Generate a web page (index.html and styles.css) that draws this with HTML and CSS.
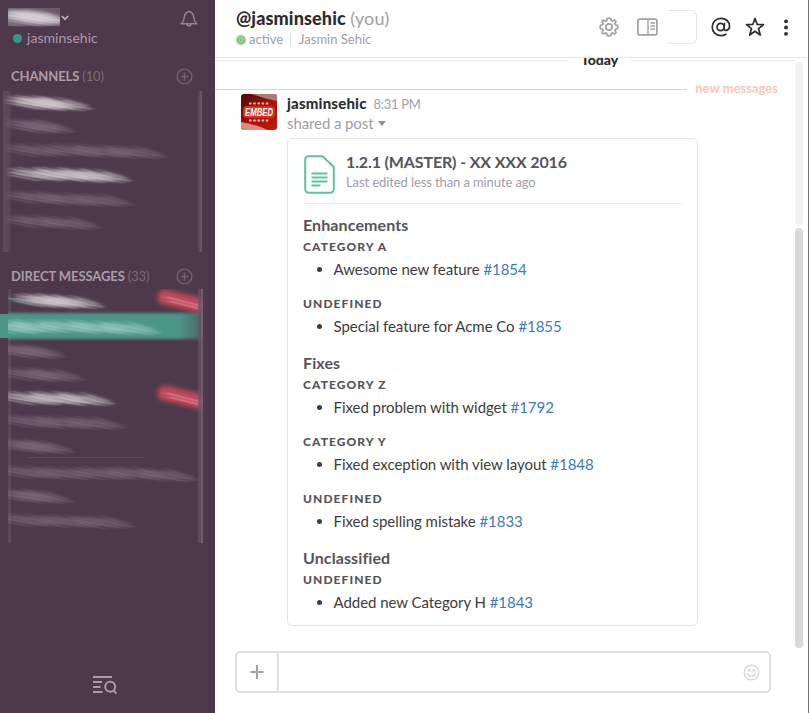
FILE: index.html
```html
<!DOCTYPE html>
<html lang="en">
<head>
<meta charset="utf-8">
<title>jasminsehic</title>
<link rel="stylesheet" href="styles.css">
</head>
<body>
<svg class="defs" width="0" height="0" aria-hidden="true">
  <defs>
    <filter id="soft" filterUnits="userSpaceOnUse" x="-12" y="-14" width="84" height="30"><feGaussianBlur stdDeviation="4 2"/></filter>
    <filter id="fine" filterUnits="userSpaceOnUse" x="-12" y="-16" width="84" height="40"><feGaussianBlur stdDeviation="2.6 0.7"/></filter>
    <filter id="glow" filterUnits="userSpaceOnUse" x="-14" y="-16" width="84" height="44"><feGaussianBlur stdDeviation="2.4"/></filter>
    <filter id="edge" x="-10%" y="-20%" width="120%" height="140%"><feGaussianBlur stdDeviation="1.4"/></filter>
    <linearGradient id="fade"><stop offset=".85" stop-color="#4c9689"/><stop offset="1" stop-color="#4c9689" stop-opacity=".3"/></linearGradient>
    <g id="smear">
      <path d="M2-5 34-4 50 1 54 5 38 5 18 4 0 0Z" fill="currentColor" opacity=".4" filter="url(#soft)"/>
      <g stroke="currentColor" fill="none" filter="url(#fine)">
        <path d="M0-6 26 0M8-7 40 1M24-7 54 2" opacity=".35"/>
        <path d="M0-2 32 4M12-4 48 4M30-4 58 5" opacity=".6"/>
        <path d="M0 1 30 7M16-1 50 7M4-4 40 4" opacity=".4"/>
        <path d="M8 0 42 6M24-3 56 6" opacity=".45"/>
      </g>
    </g>
    <g id="alert">
      <path d="M8 1 50 11" stroke="#c14a58" stroke-width="15" stroke-linecap="round" filter="url(#glow)"/>
      <path d="M9 1 44 10M12 5 44 13" fill="none" stroke="#e8a0aa" stroke-width="1.300" opacity=".6" filter="url(#fine)"/>
    </g>
  </defs>
</svg>

<aside class="sidebar">
  <div class="team">
    <div class="team-row">
      <svg class="team-name" width="52" height="20" viewBox="0 0 52 20" color="#ddd6dc">
        <path d="M0 0H52V18H0Z" fill="#6b5969"/>
        <path d="M0 3 20 2 52 13V17L30 16 0 9Z" fill="#a99da8" opacity=".8" filter="url(#edge)"/>
        <use href="#smear" x="-5" y="8"/><use href="#smear" x="5" y="9"/><use href="#smear" x="-14" y="12" opacity=".5"/>
      </svg>
      <svg width="8" height="6" viewBox="0 0 8 6" fill="none" stroke="#b9afb8" stroke-width="1.700"><path d="M.8 1 4 4.200 7.200 1"/></svg>
      <svg class="bell" width="18" height="18" viewBox="0 0 18 18" fill="none" stroke="#93848f" stroke-width="1.500" stroke-linejoin="round"><path d="M9 1.200C6 2.200 4.500 4.500 4.300 7.200 4.100 10.200 3.600 11.700 1.200 13.800H16.800C14.400 11.700 13.900 10.200 13.700 7.200 13.500 4.500 12 2.200 9 1.200ZM7 14C7.200 16.600 10.800 16.600 11 14"/></svg>
    </div>
    <div class="self"><span class="presence"></span>jasminsehic</div>
  </div>

  <div class="section-head channels-head">
    <h2>CHANNELS <span>(10)</span></h2>
    <svg width="17" height="17" viewBox="0 0 17 17" fill="none" stroke="#746174" stroke-width="1.400"><circle cx="8.500" cy="8.500" r="7.400"/><path d="M8.500 4.500V12.500M4.500 8.500H12.500"/></svg>
  </div>
  <svg class="list" width="215" height="162" viewBox="0 90 215 162">
    <path d="M3 91H11V252H3Z" fill="#5b485b"/><path d="M9 91H11V252H9Z" fill="#4d394b" opacity=".5"/>
    <path d="M198 91H202V252H198Z" fill="#5b485b"/><path d="M200 91H202V252H200Z" fill="#675567"/>
    <g color="#d4ccd0"><use href="#smear" x="8" y="102"/><use href="#smear" x="34" y="104"/><use href="#smear" x="16" y="103"/>
      <use href="#smear" x="10" y="174"/><use href="#smear" x="34" y="174"/><use href="#smear" x="55" y="175"/><use href="#smear" x="73" y="176"/></g>
    <g color="#846e84" opacity=".9"><use href="#smear" x="6" y="125"/><use href="#smear" x="17" y="127"/>
      <use href="#smear" x="8" y="150"/><use href="#smear" x="45" y="150"/><use href="#smear" x="75" y="151"/><use href="#smear" x="108" y="152"/>
      <use href="#smear" x="8" y="197"/><use href="#smear" x="40" y="199"/><use href="#smear" x="75" y="200"/>
      <use href="#smear" x="8" y="221"/><use href="#smear" x="43" y="223"/></g>
  </svg>

  <div class="section-head dm-head">
    <h2>DIRECT MESSAGES <span>(33)</span></h2>
    <svg width="17" height="17" viewBox="0 0 17 17" fill="none" stroke="#746174" stroke-width="1.400"><circle cx="8.500" cy="8.500" r="7.400"/><path d="M8.500 4.500V12.500M4.500 8.500H12.500"/></svg>
  </div>
  <svg class="list" width="215" height="258" viewBox="0 287 215 258">
    <defs><clipPath id="dm"><path d="M8 289H203V543H8Z"/></clipPath></defs>
    <path d="M0 314H8V338H0Z" fill="#4c9689"/>
    <g clip-path="url(#dm)">
      <path d="M8 289H11V543H8Z" fill="#67566a" opacity=".5"/>
      <use href="#alert" x="157" y="296"/><use href="#alert" x="157" y="392"/>
      <path d="M0 313H210V339H0Z" fill="url(#fade)" filter="url(#edge)"/>
      <g color="#d4ccd0"><use href="#smear" x="14" y="300"/><use href="#smear" x="28" y="301"/><use href="#smear" x="46" y="302"/>
        <use href="#smear" x="4" y="398"/><use href="#smear" x="30" y="398"/><use href="#smear" x="56" y="399"/></g>
      <path d="M8 298 30 304" stroke="#5e9aa0" stroke-width="2" opacity=".6"/>
      <g color="#b4d9d2" opacity=".8"><use href="#smear" x="-14" y="327"/><use href="#smear" x="6" y="326"/><use href="#smear" x="40" y="326"/><use href="#smear" x="70" y="327"/><use href="#smear" x="102" y="328"/></g>
      <g color="#846e84" opacity=".9"><use href="#smear" x="-5" y="350"/><use href="#smear" x="8" y="352"/>
        <use href="#smear" x="3" y="374"/><use href="#smear" x="27" y="375"/>
        <use href="#smear" x="3" y="421"/><use href="#smear" x="35" y="422"/><use href="#smear" x="68" y="423"/>
        <use href="#smear" x="-2" y="445"/><use href="#smear" x="16" y="447"/>
        <use href="#smear" x="3" y="472"/><use href="#smear" x="38" y="473"/><use href="#smear" x="75" y="473"/><use href="#smear" x="108" y="473"/><use href="#smear" x="140" y="475"/>
        <use href="#smear" x="-2" y="495"/><use href="#smear" x="15" y="497"/>
        <use href="#smear" x="3" y="520"/><use href="#smear" x="40" y="521"/><use href="#smear" x="76" y="522"/></g>
      <path d="M28 457.500H145" stroke="#6b596b" opacity=".5"/>
      <path d="M198 289H203V543H198Z" fill="#655466" opacity=".7"/><path d="M201 289H203V543H201Z" fill="#7b6a7b" opacity=".5"/>
    </g>
  </svg>

  <svg class="switcher" width="26" height="20" viewBox="0 0 26 20" fill="none" stroke="#a99ba8" stroke-width="2"><path d="M1 2H20M1 7H10M1 12H8.500M1 17H10.500"/><circle cx="18.200" cy="11.800" r="5"/><path d="M21.500 15.500 24.500 18.500"/></svg>
</aside>

<main class="main">
  <header class="header">
    <div class="who">
      <h1>@jasminsehic <span>(you)</span></h1>
      <div class="status"><span class="dot"></span>active<i></i>Jasmin Sehic</div>
    </div>
    <div class="tools">
      <svg class="gear" width="20" height="20" viewBox="0 0 20 20" fill="none" stroke="#a0a0a5" stroke-width="1.700" stroke-linejoin="round"><circle cx="10" cy="10" r="3.200"/><path d="M8.300 1.500Q10 .8 11.700 1.500L12.400 3.700 13.400 4.100 15.500 3.100Q16.600 3.500 17 4.600L15.900 6.700 16.300 7.700 18.500 8.400Q19.200 10 18.500 11.600L16.300 12.300 15.900 13.300 17 15.400Q16.600 16.500 15.500 16.900L13.400 15.900 12.400 16.300 11.700 18.500Q10 19.200 8.300 18.500L7.600 16.300 6.600 15.900 4.500 16.900Q3.400 16.500 3 15.400L4.100 13.300 3.700 12.300 1.500 11.600Q.8 10 1.500 8.400L3.700 7.700 4.100 6.700 3 4.600Q3.400 3.500 4.500 3.100L6.600 4.100 7.600 3.700Z"/></svg>
      <svg class="panel" width="21" height="18" viewBox="0 0 21 18" fill="none" stroke="#a0a0a5" stroke-width="1.700"><rect x=".9" y="1.200" width="19" height="15.600" rx="1.800"/><path d="M11 1V17M13.500 5H18M13.500 8H18M13.500 11H18" stroke-width="1.400"/></svg>
      <span class="search"></span>
      <svg class="at" width="20" height="20" viewBox="0 0 20 20" fill="none" stroke="#2c2d30" stroke-width="1.700" stroke-linecap="round"><circle cx="9.600" cy="10" r="3.600"/><path d="M13.500 6.500 13 11.200C12.900 14.500 18.500 14.300 18.500 9.300 18.500 4.500 14.800 1.300 10 1.300 5 1.300 1.200 5.200 1.200 10 1.200 15 5 18.700 10 18.700 12 18.700 13.500 18.200 15 17.300"/></svg>
      <svg class="star" width="20" height="20" viewBox="0 0 20 20" fill="none" stroke="#2c2d30" stroke-width="1.700" stroke-linejoin="round"><path d="M10 1.500 12.200 7.500 18.500 7.700 13.500 11.600 15.300 18 10 14.300 4.700 18 6.500 11.600 1.500 7.700 7.800 7.500Z"/></svg>
      <svg class="more" width="4" height="17" viewBox="0 0 4 17" fill="#2c2d30"><circle cx="2" cy="2.300" r="1.900"/><circle cx="2" cy="8.500" r="1.900"/><circle cx="2" cy="14.800" r="1.900"/></svg>
    </div>
  </header>

  <div class="body">
    <div class="messages">
      <div class="day"><span>Today</span></div>
      <div class="unread"><span>new messages</span></div>
      <article class="message">
        <svg class="avatar" width="36" height="36" viewBox="0 0 36 36">
          <defs><linearGradient id="red" x1="0" y1="0" x2="1" y2="1"><stop stop-color="#4e0903"/><stop offset=".5" stop-color="#a11109"/><stop offset="1" stop-color="#c41b0a"/></linearGradient></defs>
          <path d="M0 0H36V36H0Z" fill="url(#red)"/>
          <path d="M11 0H36V7Q24 5 11 0Z" fill="#a67e79"/><path d="M0 28Q14 30 27 36H0Z" fill="#e08a80"/>
          <path d="M8 9.500H28M8 26.500H28" stroke="#f5c2b8" stroke-width="2.200" stroke-dasharray="2.500 1.700"/>
          <rect x="2" y="12" width="32" height="12" rx="4" fill="#df2b20"/>
          <text x="18" y="21.500" text-anchor="middle" textLength="28" lengthAdjust="spacingAndGlyphs" class="embed">EMBED</text>
        </svg>
        <div class="content">
          <div class="byline"><b>jasminsehic</b><time>8:31 PM</time></div>
          <div class="shared">shared a post<i></i></div>
          <section class="post">
            <div class="post-head">
              <svg width="32" height="39" viewBox="0 0 32 39" fill="none" stroke="#5fc39a" stroke-width="2" stroke-linejoin="round"><path d="M5 1.200H18.500L29.800 12V34Q29.800 37.800 26 37.800H5Q1.200 37.800 1.200 34V5Q1.200 1.200 5 1.200Z"/><path d="M7.500 18.500H23.500M7.500 22.500H23.500M7.500 26.500H23.500M7.500 30.500H16.500" stroke-width="1.800"/></svg>
              <div><h2>1.2.1 (MASTER) - XX XXX 2016</h2><p>Last edited less than a minute ago</p></div>
            </div>
            <h3>Enhancements</h3>
            <h4>CATEGORY A</h4>
            <ul><li>Awesome new feature <a>#1854</a></li></ul>
            <h4>UNDEFINED</h4>
            <ul><li>Special feature for Acme Co <a>#1855</a></li></ul>
            <h3>Fixes</h3>
            <h4>CATEGORY Z</h4>
            <ul><li>Fixed problem with widget <a>#1792</a></li></ul>
            <h4>CATEGORY Y</h4>
            <ul><li>Fixed exception with view layout <a>#1848</a></li></ul>
            <h4>UNDEFINED</h4>
            <ul><li>Fixed spelling mistake <a>#1833</a></li></ul>
            <h3>Unclassified</h3>
            <h4>UNDEFINED</h4>
            <ul><li>Added new Category H <a>#1843</a></li></ul>
          </section>
        </div>
      </article>
    </div>
    <div class="scrollbar"><div class="track"></div><div class="thumb"></div></div>
  </div>

  <footer class="composer">
    <div class="plus"><svg width="14" height="14" viewBox="0 0 14 14" stroke="#a0a0a2" stroke-width="2"><path d="M7 0V14M.5 7H13.500"/></svg></div>
    <div class="input"><svg width="17" height="17" viewBox="0 0 17 17" fill="none" stroke="#d8d8da" stroke-width="1.400"><circle cx="8.500" cy="8.500" r="7.300"/><path d="M4.800 9.500C5.500 13 11.500 13 12.200 9.500"/><circle cx="6.200" cy="6.200" r=".8" fill="#d8d8da"/><circle cx="10.800" cy="6.200" r=".8" fill="#d8d8da"/></svg></div>
  </footer>
</main>
</body>
</html>
```
FILE: styles.css
```css
* { box-sizing: border-box; }
body { margin: 0; width: 809px; height: 713px; display: flex; overflow: hidden; font-family: Lato, sans-serif; font-size: 15px; color: #2c2d30; background: #fff; }
h1, h2, h3, h4, p, ul { margin: 0; padding: 0; }
svg { display: block; flex: none; }
.defs { position: absolute; }

.sidebar { width: 215px; height: 713px; flex: none; background: #4d394b; display: flex; flex-direction: column; }
.team { height: 66px; padding: 8px 17px 0 8px; }
.team-row { display: flex; height: 20px; }
.team-row svg:nth-child(2) { margin: 7px 0 0 1px; }
.team-name { overflow: hidden; }
.bell { margin: 2px 0 0 auto; }
.self { display: flex; align-items: center; height: 20px; line-height: 18px; padding-bottom: 1px; color: #ab9ba9; font-size: 14px; letter-spacing: .04px; }
.presence { width: 9px; height: 9px; border-radius: 50%; background: #38978d; margin: 1px 5px 0; }
.section-head { display: flex; align-items: center; justify-content: space-between; padding: 0 22px 0 11px; height: 20px; }
.section-head h2 { font-size: 13px; line-height: 20px; font-weight: 700; color: #ab9ba9; letter-spacing: -.1px; }
.section-head span { font-weight: 400; color: #7d6a7c; }
.channels-head { margin-bottom: 4px; }
.dm-head { margin-top: 14px; margin-bottom: 1px; }
.switcher { margin: auto 0 18px 92px; }

.main { flex: 1; display: flex; flex-direction: column; min-width: 0; border-right: 1px solid #6f6f71; }
.header { height: 58px; flex: none; display: flex; justify-content: space-between; border-bottom: 1px solid #e5e5e5; }
.who { padding: 7px 0 0 21px; }
.who h1 { font-size: 18px; line-height: 22px; font-weight: 900; white-space: nowrap; letter-spacing: .12px; }
.who h1 span { font-weight: 400; color: #9e9ea6; }
.status { display: flex; align-items: center; font-size: 13px; line-height: 20px; color: #9e9ea6; }
.status .dot { width: 10px; height: 10px; border-radius: 50%; background: #92c98f; margin: 1px 3px 0 0; }
.status i { width: 1px; height: 12px; background: #dfdfe3; margin: 0 8px 0 7px; }
.tools { display: flex; align-items: center; height: 54px; padding-right: 20px; }
.panel { margin-left: 18px; }
.search { width: 29px; height: 34px; margin-left: 10px; border: 1px solid #e5e5e5; border-left: 0; border-radius: 0 6px 6px 0; }
.at { margin-left: 14px; }
.star { margin-left: 14px; }
.more { margin-left: 19px; }

.body { flex: 1; min-height: 0; display: flex; overflow: hidden; }
.messages { width: 580px; flex: none; }
.day { display: flex; align-items: center; height: 20px; margin-top: -8px; font-size: 14px; font-weight: 900; line-height: 20px; }
.day::before { content: ""; width: 353px; height: 1px; background: #e5e5e5; margin-right: 13px; }
.day::after { content: ""; flex: 1; height: 1px; background: #e5e5e5; margin-left: 13px; }
.unread { display: flex; align-items: center; height: 20px; margin-top: 8px; color: #ffc3bc; font-size: 13px; font-weight: 700; padding-right: 17px; }
.unread::before { content: ""; flex: 1; height: 1px; background: #ffc3bc; margin: 2px 8px 0 0; }
.message { display: flex; padding: 0 0 0 26px; margin-top: -5px; }
.avatar { margin-top: 1px; border-radius: 3px; }
.embed { font: italic 900 10px "Liberation Sans", sans-serif; fill: #fff; }
.content { margin-left: 10px; }
.byline { font-size: 15px; line-height: 20px; height: 20px; }
.byline b { font-weight: 900; letter-spacing: .18px; }
.byline time { margin-left: 7px; font-size: 13px; letter-spacing: -.3px; color: #9e9ea6; }
.shared { display: flex; align-items: center; color: #9e9ea6; line-height: 20px; height: 20px; letter-spacing: -.1px; }
.shared i { border: 4px solid transparent; border-top: 5px solid #8f8f95; border-bottom: 0; margin: 1px 0 0 5px; }
.post { width: 411px; height: 488px; margin-top: 5px; padding: 13px 15px 0; border: 1px solid #e5e5e5; border-radius: 5px; color: #3d3c40; }
.post-head { display: flex; height: 52px; border-bottom: 1px solid #ededed; margin-bottom: 10px; }
.post-head svg { margin: 3px 0 0 1px; }
.post-head div { margin-left: 10px; }
.post-head h2 { font-size: 16px; line-height: 20px; color: #555459; letter-spacing: -.13px; }
.post-head p { font-size: 13px; line-height: 20px; color: #9e9ea6; letter-spacing: -.1px; }
.post h3 { font-size: 16px; line-height: 22px; height: 23px; color: #555459; letter-spacing: .1px; }
.post h4 { font-size: 12px; line-height: 20px; height: 19px; font-weight: 900; letter-spacing: 1.08px; color: #555459; }
.post ul { padding-left: 30.500px; height: 38px; }
.post ul:has(+ h3) { height: 39px; }
.post li { line-height: 26px; letter-spacing: -.05px; }
.post a { color: #3a7bbf; }

.scrollbar { width: 8px; height: 586px; margin-top: 4px; flex: none; }
.track { height: 164px; border-radius: 4px; background: #f3f3f3; margin-bottom: 2px; }
.thumb { height: 420px; border-radius: 4px; background: #d9d9de; }
.composer { display: flex; width: 536px; height: 42px; flex: none; margin: 0 0 20px 20px; border: 2px solid #e0e0e0; border-radius: 5px; }
.plus { width: 42px; display: flex; align-items: center; justify-content: center; border-right: 2px solid #e0e0e0; }
.input { flex: 1; display: flex; align-items: center; justify-content: flex-end; padding-right: 9px; }
```
